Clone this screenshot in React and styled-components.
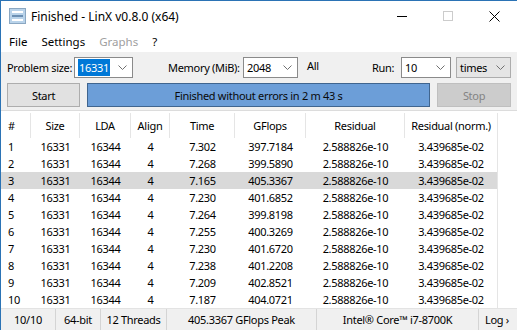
import React from 'react';
import styled, { createGlobalStyle } from 'styled-components';

const GlobalStyle = createGlobalStyle`
  html, body {
    margin: 0;
    padding: 0;
    background: #ffffff;
  }
  body {
    font-family: "Segoe UI", "Noto Sans", "Open Sans", sans-serif;
    font-size: 11px;
    letter-spacing: -0.3px;
    color: #000000;
  }
`;

const Window = styled.div`
  width: 517px;
  height: 330px;
  box-sizing: border-box;
  border-left: 1px solid #2b73b5;
  border-top: 1px solid #2b73b5;
  display: flex;
  flex-direction: column;
  overflow: hidden;
  background: #f0f0f0;
`;

const TitleBar = styled.div`
  height: 30px;
  background: #ffffff;
  display: flex;
  align-items: center;
`;

const TitleText = styled.span`
  margin-left: 5px;
  flex: 1;
  font-size: 12px;
  letter-spacing: 0;
  white-space: nowrap;
`;

const CaptionButton = styled.div`
  width: 46px;
  height: 30px;
  display: flex;
  align-items: center;
  justify-content: center;
`;

const MenuBar = styled.div`
  height: 21px;
  background: #ffffff;
  display: flex;
  align-items: center;
  padding-left: 1px;
`;

const MenuItem = styled.span`
  padding: 0 7px;
  font-size: 11.5px;
  letter-spacing: 0;
  color: ${p => (p.$disabled ? '#a0a0a0' : '#000000')};
`;

const Toolbar = styled.div`
  padding: 5px 6px 3px 6px;
  display: flex;
  flex-direction: column;
  gap: 5px;
`;

const ToolRow = styled.div`
  display: flex;
  align-items: center;
  height: ${p => p.$h}px;
  gap: ${p => p.$gap || 0}px;
`;

const Label = styled.span`
  width: ${p => p.$w}px;
  margin-left: ${p => p.$ml || 0}px;
  margin-top: ${p => p.$mt || 0}px;
  white-space: nowrap;
  flex-shrink: 0;
`;

const Combo = styled.div`
  width: ${p => p.$w}px;
  height: 21px;
  box-sizing: border-box;
  margin-left: ${p => p.$ml || 0}px;
  border: 1px solid ${p => (p.$flat ? '#adadad' : '#8a8a8a')};
  background: ${p => (p.$flat ? '#e5e5e5' : '#ffffff')};
  display: flex;
  align-items: center;
  padding-left: 3px;
  flex-shrink: 0;
`;

const ComboValue = styled.span`
  flex: 1;
  white-space: nowrap;
`;

const Selected = styled.span`
  background: #0078d7;
  color: #ffffff;
  padding: 1px 1px;
`;

const Chevron = styled.svg`
  width: 9px;
  height: 5px;
  margin-right: 5px;
`;

const Button = styled.div`
  height: 24px;
  box-sizing: border-box;
  width: ${p => p.$w}px;
  border: 1px solid ${p => (p.$disabled ? '#bfbfbf' : '#adadad')};
  background: ${p => (p.$disabled ? '#cccccc' : '#e1e1e1')};
  color: ${p => (p.$disabled ? '#838383' : '#000000')};
  display: flex;
  align-items: center;
  justify-content: center;
  flex-shrink: 0;
`;

const Progress = styled.div`
  flex: 1;
  height: 24px;
  box-sizing: border-box;
  border: 1px solid #40658f;
  background: #6c9ed8;
  display: flex;
  align-items: center;
  justify-content: center;
  color: #0a0a0a;
`;

const Table = styled.div`
  flex: 1;
  background: #ffffff;
  border-top: 1px solid #dcdcdc;
  display: flex;
  flex-direction: column;
`;

const cols = '30px 49px 51px 39px 65px 71px 99px 93px 1fr';

const HeaderRow = styled.div`
  display: grid;
  grid-template-columns: ${cols};
  height: 27px;
`;

const HeaderCell = styled.div`
  display: flex;
  align-items: center;
  justify-content: ${p => (p.$left ? 'flex-start' : 'center')};
  padding-left: ${p => (p.$left ? 7 : 0)}px;
  border-right: ${p => (p.$last ? 'none' : '1px solid #e5e5e5')};
  margin-top: 2px;
  white-space: nowrap;
`;

const Row = styled.div`
  display: grid;
  grid-template-columns: ${cols};
  height: 17px;
  background: ${p => (p.$selected ? '#d9d9d9' : 'transparent')};
`;

const Cell = styled.div`
  display: flex;
  align-items: center;
  justify-content: ${p => (p.$left ? 'flex-start' : 'center')};
  padding-left: ${p => (p.$left ? 7 : 0)}px;
  white-space: nowrap;
  border-right: ${p => (p.$edge ? '1px solid #e5e5e5' : 'none')};
  background: ${p => (p.$blank ? '#ffffff' : 'transparent')};
`;

const StatusBar = styled.div`
  height: 21px;
  display: flex;
  align-items: center;
  background: #f0f0f0;
  border-top: 1px solid #e3e3e3;
`;

const StatusCell = styled.div`
  width: ${p => (p.$w ? `${p.$w}px` : 'auto')};
  flex: ${p => (p.$w ? 'none' : 1)};
  height: 100%;
  box-sizing: border-box;
  display: flex;
  align-items: center;
  justify-content: ${p => (p.$left ? 'flex-start' : 'center')};
  padding-left: ${p => (p.$left ? 6 : 0)}px;
  border-left: ${p => (p.$first ? 'none' : '1px solid #d4d4d4')};
  white-space: nowrap;
`;

const columns = ['#', 'Size', 'LDA', 'Align', 'Time', 'GFlops', 'Residual', 'Residual (norm.)'];

const results = [
  ['7.302', '397.7184'],
  ['7.268', '399.5890'],
  ['7.165', '405.3367'],
  ['7.230', '401.6852'],
  ['7.264', '399.8198'],
  ['7.255', '400.3269'],
  ['7.230', '401.6720'],
  ['7.238', '401.2208'],
  ['7.209', '402.8521'],
  ['7.187', '404.0721'],
];

function ChevronIcon() {
  return (
    <Chevron viewBox="0 0 9 5">
      <path d="M0.5 0.5 L4.5 4.5 L8.5 0.5" fill="none" stroke="#707070" strokeWidth="1" />
    </Chevron>
  );
}

function AppIcon() {
  return (
    <svg width="17" height="16" viewBox="0 0 17 16" style={{ marginLeft: 8 }}>
      <rect x="0.5" y="0.5" width="16" height="15" fill="#b9d3ea" stroke="#8aa7c2" />
      <rect x="3" y="3" width="11" height="2" fill="#ffffff" />
      <rect x="3" y="7" width="11" height="2" fill="#6b8fb3" />
      <rect x="3" y="11" width="11" height="2" fill="#ffffff" />
    </svg>
  );
}

export default function App() {
  return (
    <>
      <GlobalStyle />
      <Window>
        <TitleBar>
          <AppIcon />
          <TitleText>Finished - LinX v0.8.0 (x64)</TitleText>
          <CaptionButton>
            <svg width="10" height="10" viewBox="0 0 10 10">
              <path d="M0 5.5 H10" stroke="#000" strokeWidth="1" />
            </svg>
          </CaptionButton>
          <CaptionButton>
            <svg width="10" height="10" viewBox="0 0 10 10">
              <rect x="0.5" y="0.5" width="9" height="9" fill="none" stroke="#cccccc" />
            </svg>
          </CaptionButton>
          <CaptionButton>
            <svg width="11" height="11" viewBox="0 0 11 11">
              <path d="M0.5 0.5 L10.5 10.5 M10.5 0.5 L0.5 10.5" stroke="#000" strokeWidth="1" />
            </svg>
          </CaptionButton>
        </TitleBar>

        <MenuBar>
          <MenuItem>File</MenuItem>
          <MenuItem>Settings</MenuItem>
          <MenuItem $disabled>Graphs</MenuItem>
          <MenuItem>?</MenuItem>
        </MenuBar>

        <Toolbar>
          <ToolRow $h={21}>
            <Label $w={67}>Problem size:</Label>
            <Combo $w={59}>
              <ComboValue><Selected>16331</Selected></ComboValue>
              <ChevronIcon />
            </Combo>
            <Label $w={75} $ml={35}>Memory (MiB):</Label>
            <Combo $w={55}>
              <ComboValue>2048</ComboValue>
              <ChevronIcon />
            </Combo>
            <Label $w={65} $ml={9} $mt={-5}>All</Label>
            <Label $w={29}>Run:</Label>
            <Combo $w={50}>
              <ComboValue>10</ComboValue>
              <ChevronIcon />
            </Combo>
            <Combo $w={55} $ml={5} $flat>
              <ComboValue>times</ComboValue>
              <ChevronIcon />
            </Combo>
          </ToolRow>
          <ToolRow $h={24} $gap={7}>
            <Button $w={73}>Start</Button>
            <Progress>Finished without errors in 2 m 43 s</Progress>
            <Button $w={74} $disabled>Stop</Button>
          </ToolRow>
        </Toolbar>

        <Table>
          <HeaderRow>
            {columns.map((c, i) => (
              <HeaderCell key={c} $left={i === 0}>{c}</HeaderCell>
            ))}
            <HeaderCell $last />
          </HeaderRow>
          {results.map(([time, gflops], i) => (
            <Row key={i} $selected={i === 2}>
              <Cell $left>{i + 1}</Cell>
              <Cell>16331</Cell>
              <Cell>16344</Cell>
              <Cell>4</Cell>
              <Cell>{time}</Cell>
              <Cell>{gflops}</Cell>
              <Cell>2.588826e-10</Cell>
              <Cell $edge>3.439685e-02</Cell>
              <Cell $blank />
            </Row>
          ))}
        </Table>

        <StatusBar>
          <StatusCell $w={54} $first>10/10</StatusCell>
          <StatusCell $w={45}>64-bit</StatusCell>
          <StatusCell $w={66}>12 Threads</StatusCell>
          <StatusCell $w={150}>405.3367 GFlops Peak</StatusCell>
          <StatusCell $w={162}>Intel® Core™ i7-8700K</StatusCell>
          <StatusCell $left>Log ›</StatusCell>
        </StatusBar>
      </Window>
    </>
  );
}
